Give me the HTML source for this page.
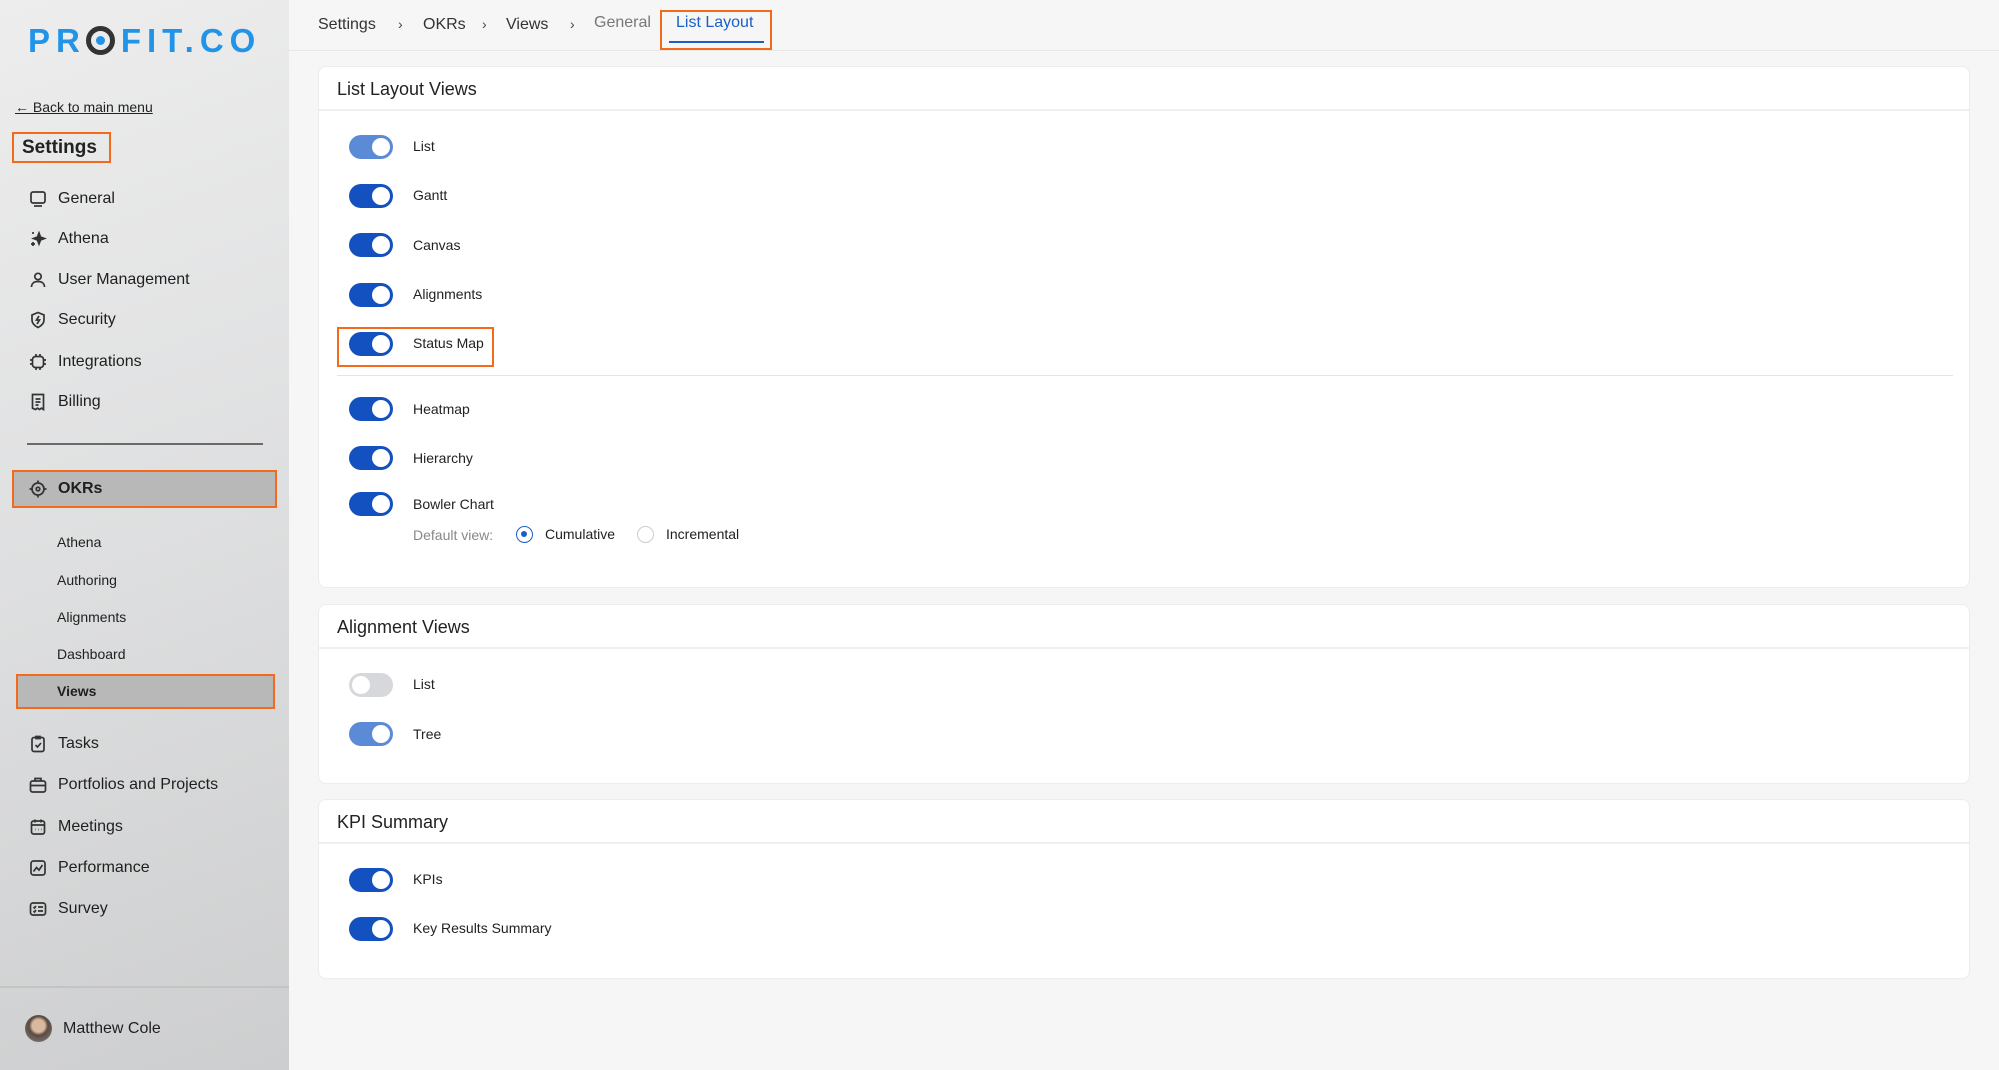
<!DOCTYPE html>
<html><head><meta charset="utf-8"><style>
*{box-sizing:border-box;margin:0;padding:0}
body{width:1999px;height:1070px;overflow:hidden;font-family:"Liberation Sans",sans-serif;background:#f6f6f6;position:relative;color:#222}
.a{position:absolute;white-space:nowrap}
#sb{position:absolute;left:0;top:0;width:289px;height:1070px;background:linear-gradient(160deg,#ededed 0%,#dedfe0 50%,#cdcecf 100%)}
.ni{position:absolute;left:28px;font-size:16px;color:#1f1f1f;display:flex;align-items:center;gap:10px}
.ni svg{width:20px;height:20px;fill:none;stroke:#333;stroke-width:1.7}
.si{position:absolute;left:57px;font-size:14px;color:#1f1f1f}
.ob{position:absolute;border:2px solid #f46a1c}
.card{position:absolute;left:318px;width:1652px;background:#fff;border:1px solid #ececec;border-radius:8px}
.ch{position:absolute;left:18px;font-size:18px;color:#222}
.hl{position:absolute;left:0;right:0;height:2px;background:#efefef}
.tg{position:absolute;left:349px;width:44px;height:24px;border-radius:12px;background:#1351c0}
.tg::after{content:"";position:absolute;right:3px;top:3px;width:18px;height:18px;border-radius:50%;background:#fff}
.tg.l{background:#5b8ad6}
.tg.off{background:#d6d8dc}
.tg.off::after{left:3px;right:auto}
.lb{position:absolute;left:413px;font-size:14px;color:#222}
</style></head><body>
<div id="sb">
<div class="a" style="left:28px;top:22px;font-size:33px;font-weight:bold;color:#2294e8;letter-spacing:6px">PR<span style="display:inline-block;width:29px;height:29px;border:5px solid #333;border-radius:50%;vertical-align:-3px;position:relative;margin-right:6px"><span style="position:absolute;left:5px;top:5px;width:9px;height:9px;border-radius:50%;background:#2294e8"></span></span>FIT.CO</div>
<div class="a" style="left:15px;top:99px;font-size:14px;text-decoration:underline;color:#222">← Back to main menu</div>
<div class="ob" style="left:12px;top:132px;width:99px;height:31px"></div>
<div class="a" style="left:22px;top:137px;font-size:19px;font-weight:bold">Settings</div>
<div class="ni" style="top:189px"><svg viewBox="0 0 20 20"><rect x="3" y="3" width="14" height="11" rx="2"/><path d="M6 17h8"/></svg>General</div>
<div class="ni" style="top:229px"><svg viewBox="0 0 20 20"><path d="M11 4l1.5 4 4 1.5-4 1.5L11 15l-1.5-4-4-1.5 4-1.5z" fill="#333"/><path d="M5 13v4M3 15h4M5 3v2" /></svg>Athena</div>
<div class="ni" style="top:270px"><svg viewBox="0 0 20 20"><circle cx="10" cy="6.5" r="3.2"/><path d="M3.5 17c0-4 3-5.5 6.5-5.5s6.5 1.5 6.5 5.5"/></svg>User Management</div>
<div class="ni" style="top:310px"><svg viewBox="0 0 20 20"><path d="M10 2.5l6 2.5v5c0 4-3 6-6 7.5-3-1.5-6-3.5-6-7.5V5z"/><path d="M11 6l-2.5 4h3L9 14"/></svg>Security</div>
<div class="ni" style="top:352px"><svg viewBox="0 0 20 20"><rect x="4.5" y="4.5" width="11" height="11" rx="3"/><path d="M8 2v2.5M12 2v2.5M8 15.5V18M12 15.5V18M2 8h2.5M2 12h2.5M15.5 8H18M15.5 12H18"/></svg>Integrations</div>
<div class="ni" style="top:392px"><svg viewBox="0 0 20 20"><path d="M4.5 2.5h11v15l-2-1.3-2 1.3-2-1.3-2 1.3-3-1.3z"/><path d="M7.5 7h5M7.5 10h5M7.5 13h3"/></svg>Billing</div>
<div class="a" style="left:27px;top:443px;width:236px;height:2px;background:#6a6a6a"></div>
<div class="a" style="left:12px;top:470px;width:265px;height:38px;background:#b8b8b9;border:2px solid #f46a1c"></div>
<div class="ni" style="top:479px;font-weight:bold"><svg viewBox="0 0 20 20"><circle cx="10" cy="10" r="6"/><circle cx="10" cy="10" r="1.8"/><path d="M10 1.5v2.5M10 16v2.5M1.5 10H4M16 10h2.5"/></svg>OKRs</div>
<div class="si" style="top:534px">Athena</div>
<div class="si" style="top:572px">Authoring</div>
<div class="si" style="top:609px">Alignments</div>
<div class="si" style="top:646px">Dashboard</div>
<div class="a" style="left:16px;top:674px;width:259px;height:35px;background:#b8b8b9;border:2px solid #f46a1c"></div>
<div class="si" style="top:683px;font-weight:bold">Views</div>
<div class="ni" style="top:734px"><svg viewBox="0 0 20 20"><rect x="4" y="3.5" width="12" height="14" rx="2"/><path d="M8 2.5h4v2H8zM7.5 11l2 2 3.5-4"/></svg>Tasks</div>
<div class="ni" style="top:775px"><svg viewBox="0 0 20 20"><rect x="2.5" y="6" width="15" height="11" rx="2"/><path d="M7 6V3.5h6V6M2.5 10.5h15"/></svg>Portfolios and Projects</div>
<div class="ni" style="top:817px"><svg viewBox="0 0 20 20"><rect x="3.5" y="4" width="13" height="13" rx="2"/><path d="M7 2.5v3M13 2.5v3M3.5 8h13M7 12.5h.5M10 12.5h.5M13 12.5h.5"/></svg>Meetings</div>
<div class="ni" style="top:858px"><svg viewBox="0 0 20 20"><rect x="3" y="3" width="14" height="14" rx="2.5"/><path d="M5.5 13.5l3-4 2.5 2.5 3.5-5"/></svg>Performance</div>
<div class="ni" style="top:899px"><svg viewBox="0 0 20 20"><rect x="2.5" y="4" width="15" height="12" rx="2.5"/><path d="M5.5 8l1 1 1.5-2M5.5 12l1 1 1.5-2M10 8h5M10 12h5"/></svg>Survey</div>
<div class="a" style="left:0;top:986px;width:289px;height:2px;background:#c4c4c5"></div>
<div class="a" style="left:25px;top:1015px;width:27px;height:27px;border-radius:50%;background:radial-gradient(circle at 50% 40%,#d8b9a0 0 30%,#5a4a40 45%,#888 100%)"></div>
<div class="a" style="left:63px;top:1020px;font-size:16px;color:#1f1f1f">Matthew Cole</div>
</div>
<div class="a" style="left:289px;top:50px;width:1710px;height:1px;background:#e8e8e8"></div>
<div class="a" style="left:318px;top:16px;font-size:16px;color:#333">Settings</div>
<div class="a" style="left:398px;top:16px;font-size:14px;color:#444">›</div>
<div class="a" style="left:423px;top:16px;font-size:16px;color:#333">OKRs</div>
<div class="a" style="left:482px;top:16px;font-size:14px;color:#444">›</div>
<div class="a" style="left:506px;top:16px;font-size:16px;color:#333">Views</div>
<div class="a" style="left:570px;top:16px;font-size:14px;color:#444">›</div>
<div class="a" style="left:594px;top:14px;font-size:16px;color:#777">General</div>
<div class="ob" style="left:660px;top:10px;width:112px;height:40px"></div>
<div class="a" style="left:676px;top:14px;font-size:16px;color:#1a5fc8">List Layout</div>
<div class="a" style="left:669px;top:41px;width:95px;height:2px;background:#1a5fc8"></div>

<div class="card" style="top:66px;height:522px">
<div class="ch" style="top:12px">List Layout Views</div>
<div class="hl" style="top:42px"></div>
<div class="a" style="left:18px;top:308px;width:1616px;height:1px;background:#e4e4e4"></div>
</div>
<div class="tg l" style="top:135px"></div><div class="lb" style="top:138px">List</div>
<div class="tg" style="top:184px"></div><div class="lb" style="top:187px">Gantt</div>
<div class="tg" style="top:233px"></div><div class="lb" style="top:237px">Canvas</div>
<div class="tg" style="top:283px"></div><div class="lb" style="top:286px">Alignments</div>
<div class="ob" style="left:337px;top:327px;width:157px;height:40px"></div>
<div class="tg" style="top:332px"></div><div class="lb" style="top:335px">Status Map</div>
<div class="tg" style="top:397px"></div><div class="lb" style="top:401px">Heatmap</div>
<div class="tg" style="top:446px"></div><div class="lb" style="top:450px">Hierarchy</div>
<div class="tg" style="top:492px"></div><div class="lb" style="top:496px">Bowler Chart</div>
<div class="a" style="left:413px;top:527px;font-size:14px;color:#888">Default view:</div>
<div class="a" style="left:516px;top:526px;width:17px;height:17px;border-radius:50%;border:1.5px solid #1a5fc8"><div style="position:absolute;left:4px;top:4px;width:6px;height:6px;border-radius:50%;background:#1a5fc8"></div></div>
<div class="a" style="left:545px;top:526px;font-size:14px;color:#222">Cumulative</div>
<div class="a" style="left:637px;top:526px;width:17px;height:17px;border-radius:50%;border:1px solid #ccc"></div>
<div class="a" style="left:666px;top:526px;font-size:14px;color:#222">Incremental</div>

<div class="card" style="top:604px;height:180px">
<div class="ch" style="top:12px">Alignment Views</div>
<div class="hl" style="top:42px"></div>
</div>
<div class="tg off" style="top:673px"></div><div class="lb" style="top:676px">List</div>
<div class="tg l" style="top:722px"></div><div class="lb" style="top:726px">Tree</div>

<div class="card" style="top:799px;height:180px">
<div class="ch" style="top:12px">KPI Summary</div>
<div class="hl" style="top:42px"></div>
</div>
<div class="tg" style="top:868px"></div><div class="lb" style="top:871px">KPIs</div>
<div class="tg" style="top:917px"></div><div class="lb" style="top:920px">Key Results Summary</div>
</body></html>
